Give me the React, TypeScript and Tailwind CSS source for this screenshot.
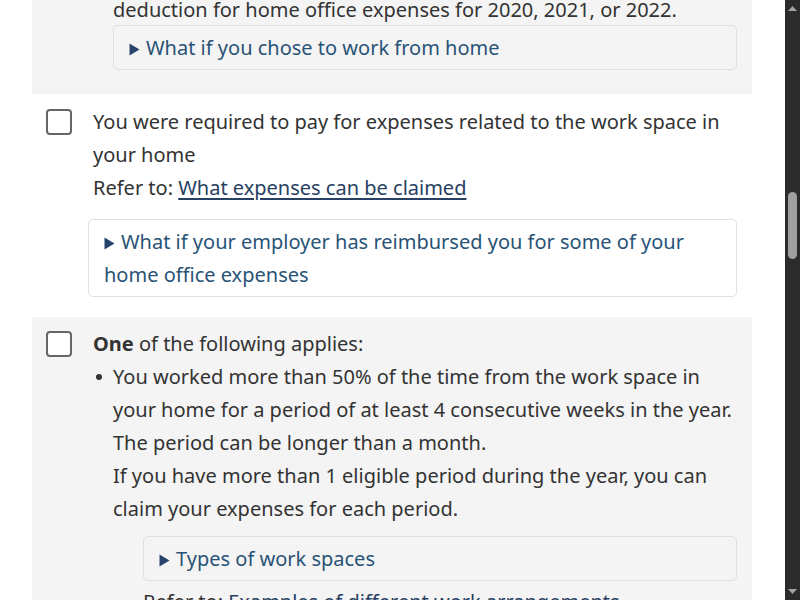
import type { ReactNode } from "react";

function Caret() {
  return (
    <svg width="11" height="13" viewBox="0 0 11 13" className="mr-[6px] inline-block align-[-1px]">
      <path d="M0.5 0.5 L10.5 6.5 L0.5 12.5 Z" fill="#26446c" />
    </svg>
  );
}

function Details({ children, className = "" }: { children: ReactNode; className?: string }) {
  return (
    <div className={"rounded-[5px] border border-[#e0e0e0] px-[15px] py-[5px] text-[#295376] " + className}>
      <Caret />
      {children}
    </div>
  );
}

function Checkbox() {
  return <span className="mt-[4px] block h-[26px] w-[26px] shrink-0 rounded-[4px] border-2 border-[#666] bg-white" />;
}

function Scrollbar() {
  return (
    <div className="flex w-[15px] shrink-0 flex-col items-center bg-[#2b2b2b]">
      <svg width="9" height="5" viewBox="0 0 9 5" className="mt-[6px]">
        <path d="M0 5 L4.5 0 L9 5 Z" fill="#a3a3a3" />
      </svg>
      <div className="mt-[181px] h-[67px] w-[9px] rounded-full bg-[#9f9f9f]" />
      <div className="flex-1" />
      <svg width="9" height="5" viewBox="0 0 9 5" className="mb-[6px]">
        <path d="M0 0 L4.5 5 L9 0 Z" fill="#a3a3a3" />
      </svg>
    </div>
  );
}

export default function App() {
  return (
    <div className="flex h-screen w-full overflow-hidden bg-white font-['Noto_Sans',sans-serif] text-[20px] leading-[33px] text-[#333]">
      <main className="flex-1 overflow-hidden pl-[32px] pr-[33px]">
        <div className="-mt-[7px]">
          {/* Previous item, tail end */}
          <section className="bg-[#f4f4f4] pb-[24px] pl-[81px] pr-[15px]">
            <p>deduction for home office expenses for 2020, 2021, or 2022.</p>
            <Details className="-mt-[1px]">What if you chose to work from home</Details>
          </section>

          <section className="bg-white pb-[20px] pl-[14px] pr-[15px] pt-[11px]">
            <div className="flex gap-[21px]">
              <Checkbox />
              <div>
                <p>You were required to pay for expenses related to the work space in your home</p>
                <p>
                  Refer to:{" "}
                  <a href="#" className="text-[#284162] underline underline-offset-[3px]">
                    What expenses can be claimed
                  </a>
                </p>
              </div>
            </div>
            <Details className="ml-[42px] mt-[15px]">
              What if your employer has reimbursed you for some of your home office expenses
            </Details>
          </section>

          <section className="bg-[#f4f4f4] pb-[24px] pl-[14px] pr-[15px] pt-[10px]">
            <div className="flex gap-[21px]">
              <Checkbox />
              <div className="flex-1">
                <p>
                  <strong className="font-bold">One</strong> of the following applies:
                </p>
                <ul className="pl-[20px]">
                  <li className="flex">
                    <span className="-ml-[17px] mr-[11px] mt-[14px] h-[6px] w-[6px] shrink-0 rounded-full bg-[#333]" />
                    <div className="flex-1">
                      <p>
                        You worked more than 50% of the time from the work space in your home for a period
                        of at least 4 consecutive weeks in the year. The period can be longer than a month.
                      </p>
                      <p>
                        If you have more than 1 eligible period during the year, you can claim your expenses
                        for each period.
                      </p>
                      <Details className="ml-[30px] mt-[11px]">Types of work spaces</Details>
                      <p className="ml-[30px] mt-[4px]">
                        Refer to:{" "}
                        <a href="#" className="text-[#284162] underline underline-offset-[3px]">
                          Examples of different work arrangements
                        </a>
                      </p>
                    </div>
                  </li>
                </ul>
              </div>
            </div>
          </section>
        </div>
      </main>
      <Scrollbar />
    </div>
  );
}
